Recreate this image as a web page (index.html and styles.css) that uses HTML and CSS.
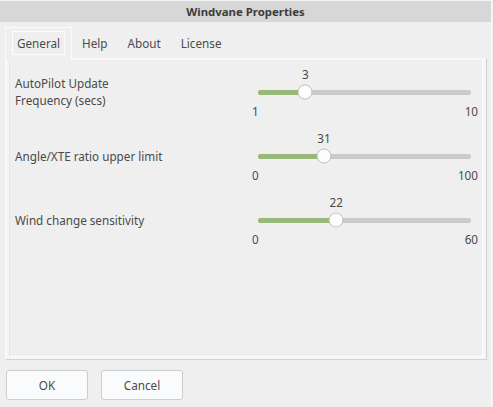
FILE: index.html
```html
<!DOCTYPE html>
<html>
<head>
<meta charset="utf-8">
<link rel="stylesheet" href="styles.css">
</head>
<body>
<div class="window">
  <div class="titlebar">Windvane Properties</div>
  <div class="tabs">
    <div class="tab active"><span class="focus">General</span></div>
    <div class="tab">Help</div>
    <div class="tab">About</div>
    <div class="tab">License</div>
  </div>
  <div class="panel">
    <div class="panel-inner">
      <div class="row">
        <div class="label">AutoPilot Update<br>Frequency (secs)</div>
        <div class="slider">
          <div class="value-row"><span class="value" style="left: 22.2%">3</span></div>
          <div class="track-row">
            <div class="track">
              <div class="fill" style="width: 22.2%"></div>
              <div class="handle" style="left: 22.2%"></div>
            </div>
          </div>
          <div class="range"><span>1</span><span>10</span></div>
        </div>
      </div>
      <div class="row">
        <div class="label">Angle/XTE ratio upper limit</div>
        <div class="slider">
          <div class="value-row"><span class="value" style="left: 31%">31</span></div>
          <div class="track-row">
            <div class="track">
              <div class="fill" style="width: 31%"></div>
              <div class="handle" style="left: 31%"></div>
            </div>
          </div>
          <div class="range"><span>0</span><span>100</span></div>
        </div>
      </div>
      <div class="row">
        <div class="label">Wind change sensitivity</div>
        <div class="slider">
          <div class="value-row"><span class="value" style="left: 36.7%">22</span></div>
          <div class="track-row">
            <div class="track">
              <div class="fill" style="width: 36.7%"></div>
              <div class="handle" style="left: 36.7%"></div>
            </div>
          </div>
          <div class="range"><span>0</span><span>60</span></div>
        </div>
      </div>
    </div>
  </div>
  <div class="buttons">
    <button class="btn">OK</button>
    <button class="btn">Cancel</button>
  </div>
</div>
</body>
</html>
```
FILE: styles.css
```css
html, body {
  margin: 0;
  padding: 0;
  background: #efefef;
}
body {
  font-family: "Noto Sans", "Open Sans", sans-serif;
  font-size: 11.7px;
  color: #4a4a4a;
}
.window {
  width: 491px;
  height: 407px;
  border-right: 1px solid #fafafa;
  box-sizing: content-box;
}
.titlebar {
  border-top: 1px solid #f3f3f3;
  height: 21px;
  line-height: 21px;
  background: #d7d7d7;
  text-align: center;
  font-weight: bold;
  color: #3c3c3c;
  font-size: 11.4px;
}
.tabs {
  display: flex;
  margin-top: 5px;
  padding-left: 5px;
  height: 31px;
  position: relative;
  z-index: 1;
}
.tab {
  padding: 2px 10px 0;
  line-height: 29px;
  color: #4a4a4a;
}
.tab.active {
  padding: 3px 6px 0 6px;
  border: 1px solid #fbfbfb;
  border-bottom: none;
  background: #efefef;
  height: 29px;
  line-height: 22px;
}
.focus {
  display: block;
  border: 1px solid #fdfdfd;
  padding: 0 4px;
  height: 22px;
}
.panel {
  margin: 0 5px 0 5px;
  width: 474px;
  height: 298px;
  border: 1px solid #fbfbfb;
  border-right-color: #cdcdcd;
  border-bottom-color: #d2d2d2;
  padding: 1px 3px 1px 3px;
  background: #f6f6f6;
}
.panel-inner {
  height: 297px;
  border-left: 1px solid #e4e4e4;
  border-right: 1px solid #ffffff;
  border-bottom: 1px solid #ffffff;
  background: #efefef;
  padding: 4px 0 0 5px;
  box-sizing: border-box;
  display: flex;
  flex-direction: column;
  gap: 8px;
}
.row {
  display: grid;
  grid-template-columns: 237px 226px;
  align-items: center;
}
.label {
  line-height: 17px;
  color: #4a4a4a;
}
.slider {
  display: flex;
  flex-direction: column;
}
.value-row {
  position: relative;
  height: 18px;
  margin: 0 7px 0 6px;
}
.value {
  position: absolute;
  top: 1px;
  line-height: 18px;
  transform: translateX(-50%);
}
.track-row {
  height: 20px;
  display: flex;
  align-items: center;
  margin: 0 7px 0 6px;
}
.track {
  position: relative;
  width: 100%;
  height: 5px;
  border-radius: 3px;
  background: #cbcbcb;
}
.fill {
  position: absolute;
  left: 0;
  top: 0;
  bottom: 0;
  border-radius: 3px;
  background: #97b878;
}
.handle {
  position: absolute;
  top: 50%;
  width: 13px;
  height: 13px;
  border: 1px solid #bdbdbd;
  border-radius: 50%;
  background: #fdfdfd;
  transform: translate(-50%, -50%);
}
.range {
  display: flex;
  justify-content: space-between;
  height: 18px;
  line-height: 18px;
}
.buttons {
  display: flex;
  gap: 13px;
  padding: 10px 0 0 6px;
}
.btn {
  width: 82px;
  height: 30px;
  background: #fafbfc;
  border: 1px solid #cdcdcd;
  border-radius: 3px;
  font-family: "Noto Sans", "Open Sans", sans-serif;
  font-size: 11.7px;
  color: #4a4a4a;
  padding: 0;
}
```
